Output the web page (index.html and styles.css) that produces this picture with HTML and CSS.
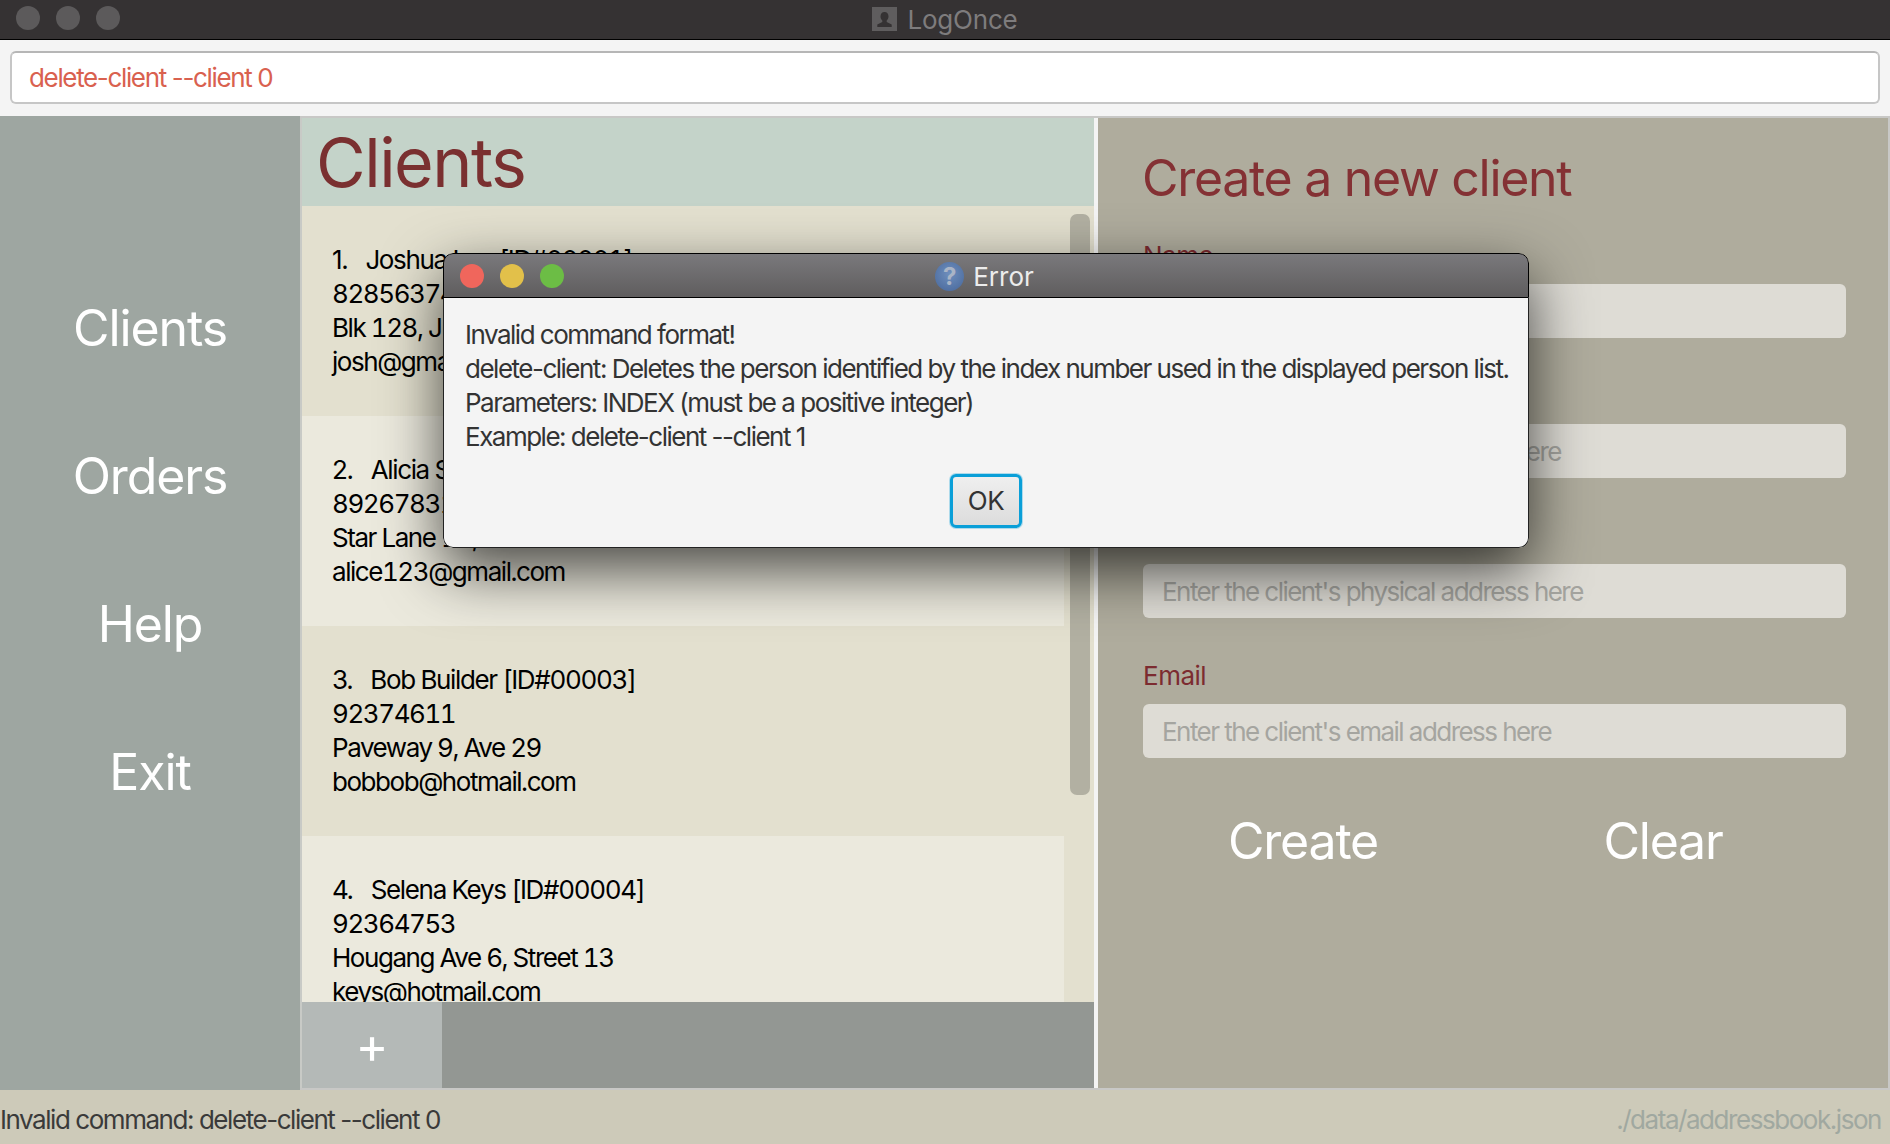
FILE: index.html
```html
<!DOCTYPE html>
<html lang="en">
<head>
  <meta charset="UTF-8" />
  <title>LogOnce</title>
  <link rel="stylesheet" href="styles.css">
</head>
<body>
  <div class="app">
    <div class="titlebar">
      <div class="lights">
        <span class="light"></span>
        <span class="light"></span>
        <span class="light"></span>
      </div>
      <div class="title">
        <svg class="title-icon" width="25" height="24" viewBox="0 0 25 24">
          <rect width="25" height="24" fill="#5f5d5e"/>
          <path d="M12.5 5c-2.6 0-4 2-4 4.4 0 1.800.8 3.100 1.800 4v1.600l-5 2.500V20h14.400v-2.500l-5-2.500v-1.600c1-.9 1.800-2.200 1.800-4C16.500 7 15.100 5 12.500 5z" fill="#353233"/>
        </svg>
        <span>LogOnce</span>
      </div>
    </div>

    <div class="command-box">
      <div class="command-input">delete-client --client 0</div>
    </div>

    <div class="main">
      <nav class="sidebar">
        <div class="nav-item">Clients</div>
        <div class="nav-item">Orders</div>
        <div class="nav-item">Help</div>
        <div class="nav-item">Exit</div>
      </nav>

      <section class="clients">
        <h1 class="clients-title">Clients</h1>
        <div class="clients-body">
          <div class="client-list">
            <div class="client-card">
              <div class="client-name"><span class="num">1.</span>Joshua Lee [ID#00001]</div>
              <div>82856374</div>
              <div>Blk 128, Jurong St 12</div>
              <div>josh@gmail.com</div>
            </div>
            <div class="client-card light-card">
              <div class="client-name"><span class="num">2.</span>Alicia Soh [ID#00002]</div>
              <div>89267831</div>
              <div>Star Lane 12, Ave 4</div>
              <div>alice123@gmail.com</div>
            </div>
            <div class="client-card">
              <div class="client-name"><span class="num">3.</span>Bob Builder [ID#00003]</div>
              <div>92374611</div>
              <div>Paveway 9, Ave 29</div>
              <div>bobbob@hotmail.com</div>
            </div>
            <div class="client-card light-card">
              <div class="client-name"><span class="num">4.</span>Selena Keys [ID#00004]</div>
              <div>92364753</div>
              <div>Hougang Ave 6, Street 13</div>
              <div>keys@hotmail.com</div>
            </div>
          </div>
          <div class="scrollbar"><div class="scroll-thumb"></div></div>
        </div>
        <div class="tabbar">
          <div class="tab-add">+</div>
        </div>
      </section>

      <section class="create-panel">
        <h2 class="create-title">Create a new client</h2>
        <div class="field">
          <div class="field-label">Name</div>
          <div class="field-input">Enter the client's name here</div>
        </div>
        <div class="field">
          <div class="field-label">Phone</div>
          <div class="field-input">Enter the client's phone number here</div>
        </div>
        <div class="field">
          <div class="field-label">Address</div>
          <div class="field-input">Enter the client's physical address here</div>
        </div>
        <div class="field">
          <div class="field-label">Email</div>
          <div class="field-input">Enter the client's email address here</div>
        </div>
        <div class="create-actions">
          <div class="action">Create</div>
          <div class="action">Clear</div>
        </div>
      </section>
    </div>

    <div class="statusbar">
      <span>Invalid command: delete-client --client 0</span>
      <span class="status-path">./data/addressbook.json</span>
    </div>
  </div>

  <div class="dialog">
    <div class="dialog-titlebar">
      <div class="dialog-lights">
        <span class="dot dot-red"></span>
        <span class="dot dot-yellow"></span>
        <span class="dot dot-green"></span>
      </div>
      <div class="dialog-title">
        <span class="help-icon">?</span>
        <span>Error</span>
      </div>
    </div>
    <div class="dialog-body">
      <div>Invalid command format!</div>
      <div>delete-client: Deletes the person identified by the index number used in the displayed person list.</div>
      <div>Parameters: INDEX (must be a positive integer)</div>
      <div>Example: delete-client --client 1</div>
      <div class="dialog-actions">
        <div class="ok-button">OK</div>
      </div>
    </div>
  </div>
</body>
</html>
```

FILE: styles.css
```css
* {
  box-sizing: border-box;
}
html, body {
  margin: 0;
  height: 100%;
  overflow: hidden;
}
body {
  position: relative;
  font-family: Inter, "Noto Sans", sans-serif;
  font-size: 26px;
  letter-spacing: -1.45px;
  color: #000;
}
.app {
  display: flex;
  flex-direction: column;
  height: 1144px;
}

/* window title */
.titlebar {
  position: relative;
  display: flex;
  align-items: center;
  justify-content: center;
  height: 40px;
  background-color: #353233;
  border-bottom: 1px solid #000;
  flex: none;
}
.lights {
  position: absolute;
  left: 16px;
  top: 6px;
  display: flex;
  gap: 16px;
}
.light {
  width: 24px;
  height: 24px;
  border-radius: 50%;
  background-color: #5c5a5b;
}
.title {
  display: flex;
  align-items: center;
  gap: 10px;
  color: #7e7c7d;
  letter-spacing: -0.2px;
  margin-top: -1px;
}

/* command box */
.command-box {
  height: 76px;
  padding: 11px 10px 12px;
  background-color: #f4f4f4;
  flex: none;
}
.command-input {
  display: flex;
  align-items: center;
  height: 53px;
  padding-left: 17px;
  background-color: #fff;
  border: 2px solid #c6c6c6;
  border-top-color: #b6b6b6;
  border-radius: 6px;
  color: #d9614f;
  letter-spacing: -1.35px;
}

/* main columns */
.main {
  display: flex;
  flex: 1;
  min-height: 0;
  background-color: #c8c8c6;
}
.sidebar {
  width: 300px;
  flex: none;
  padding-top: 138px;
  background-color: #9ea6a1;
}
.nav-item {
  display: flex;
  align-items: center;
  justify-content: center;
  height: 148px;
  color: #fff;
  font-size: 50px;
  letter-spacing: -1.1px;
}

/* client list */
.clients {
  display: flex;
  flex-direction: column;
  width: 794px;
  flex: none;
  margin: 2px 0;
  border-left: 2px solid #c8cac6;
  background-color: #e3e0cf;
}
.clients-title {
  height: 88px;
  margin: 0;
  padding-left: 14px;
  background-color: #c4d3c9;
  color: #7a3030;
  font-size: 68px;
  font-weight: 400;
  line-height: 88px;
  letter-spacing: -1.5px;
  flex: none;
}
.clients-body {
  display: flex;
  flex: 1;
  min-height: 0;
}
.client-list {
  width: 762px;
  flex: none;
  overflow: hidden;
}
.client-card {
  height: 210px;
  padding: 37px 0 0 30px;
  line-height: 34px;
  font-variant-numeric: tabular-nums;
}
.client-name {
  letter-spacing: -1.35px;
}
.num {
  margin-right: 18px;
  font-variant-numeric: normal;
}
.light-card {
  background-color: #ebe9dd;
}
.scrollbar {
  padding: 8px 4px 0 6px;
  flex: 1;
}
.scroll-thumb {
  height: 581px;
  border-radius: 7px;
  background-color: #b2b0a2;
}
.tabbar {
  height: 86px;
  background-color: #939793;
  flex: none;
}
.tab-add {
  display: flex;
  align-items: center;
  justify-content: center;
  width: 140px;
  height: 86px;
  background-color: #b4b9b7;
  color: #fff;
  font-size: 50px;
  letter-spacing: 0;
}

/* create form */
.create-panel {
  flex: 1;
  margin: 2px 2px 2px 0;
  border-left: 4px solid #f4f4f4;
  padding: 25px 42px 0 45px;
  background-color: #afac9d;
}
.create-title {
  margin: 0 0 23px -1px;
  color: #843134;
  font-size: 50px;
  font-weight: 400;
  line-height: 70px;
  letter-spacing: -1.3px;
}
.field {
  margin-bottom: 38px;
}
.field-label {
  margin-bottom: 8px;
  color: #7c2b30;
  line-height: 40px;
  letter-spacing: -0.5px;
}
.field-input {
  display: flex;
  align-items: center;
  height: 54px;
  padding-left: 19px;
  border-radius: 6px;
  background-color: #dedcd5;
  color: #a5a5a0;
  letter-spacing: -1.55px;
}
.create-actions {
  display: flex;
  width: 720px;
  margin: 48px 0 0 -20px;
}
.action {
  width: 360px;
  text-align: center;
  color: #fff;
  font-size: 50px;
  line-height: 70px;
  letter-spacing: -1.2px;
}

/* status */
.statusbar {
  display: flex;
  align-items: center;
  justify-content: space-between;
  height: 54px;
  padding: 5px 9px 0 0;
  background-color: #cdcab9;
  color: #3a3a3a;
  flex: none;
}
.status-path {
  color: #a0a8a0;
}

/* error dialog, floats over the window */
.dialog {
  position: absolute;
  left: 443px;
  top: 253px;
  width: 1086px;
  height: 295px;
  border-radius: 10px;
  box-shadow: 0 22px 60px rgba(0, 0, 0, 0.7);
  overflow: hidden;
}
.dialog-titlebar {
  position: relative;
  display: flex;
  align-items: center;
  justify-content: center;
  height: 45px;
  border: 1px solid #000;
  border-radius: 10px 10px 0 0;
  background: linear-gradient(#7a797c, #5f5d5e);
}
.dialog-lights {
  position: absolute;
  left: 16px;
  top: 10px;
  display: flex;
  gap: 16px;
}
.dot {
  width: 24px;
  height: 24px;
  border-radius: 50%;
}
.dot-red {
  background-color: #f0665c;
}
.dot-yellow {
  background-color: #e2c04a;
}
.dot-green {
  background-color: #6cbd45;
}
.dialog-title {
  display: flex;
  align-items: center;
  gap: 9px;
  color: #ececec;
  letter-spacing: 0;
  margin: 2px 0 0 -3px;
}
.help-icon {
  width: 29px;
  height: 29px;
  border-radius: 50%;
  background: radial-gradient(circle at 50% 40%, #6f8fbd, #46669a);
  color: #a9b4c6;
  font-size: 24px;
  font-weight: 700;
  line-height: 29px;
  text-align: center;
}
.dialog-body {
  height: 250px;
  padding: 20px 0 0 21px;
  background-color: #f4f4f4;
  border: 1px solid #222;
  border-top: none;
  border-radius: 0 0 10px 10px;
  color: #333;
  line-height: 34px;
  letter-spacing: -1.5px;
}
.dialog-actions {
  display: flex;
  justify-content: center;
  margin: 20px 0 0 -21px;
}
.ok-button {
  display: flex;
  align-items: center;
  justify-content: center;
  width: 72px;
  height: 54px;
  border: 3px solid #0a9fd8;
  border-radius: 6px;
  background: linear-gradient(#efefef, #dcdcdc);
  box-shadow: 0 0 0 1px rgba(10, 159, 216, 0.3);
  letter-spacing: -0.5px;
}
```
